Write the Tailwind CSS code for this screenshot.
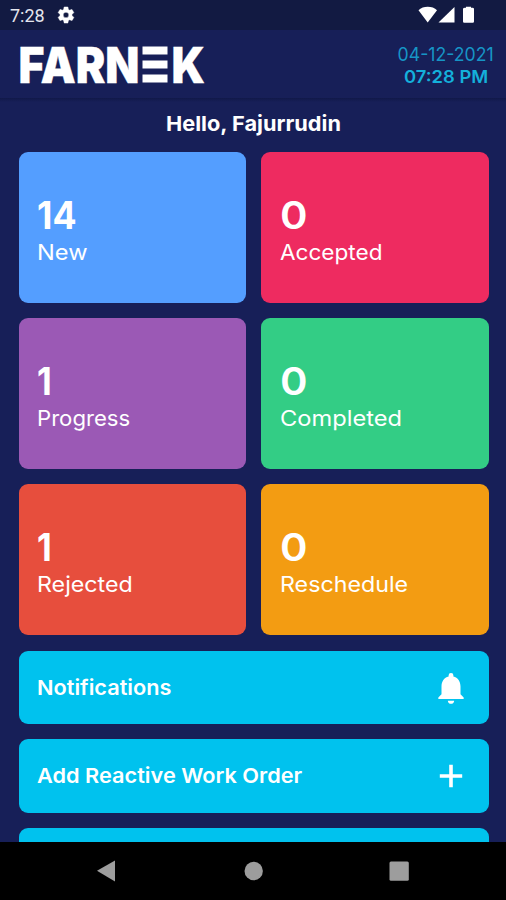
<!DOCTYPE html>
<html lang="en">
<head>
<meta charset="utf-8">
<title>Farnek</title>
<script src="https://cdn.jsdelivr.net/npm/@tailwindcss/browser@4"></script>
</head>
<body class="w-[506px] h-[900px] overflow-hidden bg-[#171f58] text-white font-['Inter','Open_Sans',sans-serif] flex flex-col">
  <div class="h-[30px] shrink-0 bg-[#121a42] flex items-center pl-[10px] pr-[32px]">
    <span class="font-['Roboto',sans-serif] text-[18px] leading-[30px] text-[#e4e6ee] pt-[2px]">7:28</span>
    <svg class="ml-[11px]" width="20" height="20" viewBox="0 0 24 24" fill="#fff" stroke="#fff" stroke-width=".6"><path d="M19.14 12.94c.04-.3.06-.61.06-.94s-.02-.64-.07-.94l2.03-1.58a.49.49 0 0 0 .12-.61l-1.92-3.32a.49.49 0 0 0-.59-.22l-2.39.96a7 7 0 0 0-1.62-.94l-.36-2.54a.48.48 0 0 0-.48-.41h-3.84a.48.48 0 0 0-.47.41l-.36 2.54a7 7 0 0 0-1.62.94l-2.39-.96a.48.48 0 0 0-.59.22L2.74 8.87a.48.48 0 0 0 .12.61l2.03 1.58a6 6 0 0 0 0 1.88l-2.03 1.58a.49.49 0 0 0-.12.61l1.92 3.32c.12.22.37.29.59.22l2.39-.96c.5.38 1.03.7 1.62.94l.36 2.54c.05.24.24.41.48.41h3.84c.24 0 .44-.17.47-.41l.36-2.54a7 7 0 0 0 1.62-.94l2.39.96c.22.08.47 0 .59-.22l1.92-3.32a.48.48 0 0 0-.12-.61zM12 15.4a3.4 3.4 0 1 1 0-6.8 3.4 3.4 0 0 1 0 6.8z"/></svg>
    <svg class="ml-auto" width="56" height="18" viewBox="0 0 56 18" fill="#fff"><path d="M.5 4.200C5-.4 14.500-.4 19 4.200L9.700 16.500z"/><path d="M20.500 16.500 36.500 1v15.500z"/><path d="M47 1.800h1V.8h5v1h1.500q1.500 0 1.500 1.200v12.500q0 1.200-1.200 1.200h-8.600q-1.200 0-1.200-1.200V3q0-1.200 2-1.200z"/></svg>
  </div>
  <header class="h-[68px] shrink-0 flex justify-between pl-[14px] pr-[12px]">
    <svg class="overflow-visible" width="196" height="68" viewBox="14 30 196 68" fill="#fff" font-family="Inter, sans-serif" font-weight="900" font-size="49">
      <text x="18.500" y="82.500" textLength="121" lengthAdjust="spacingAndGlyphs" stroke="#fff" stroke-width=".3">FARN</text>
      <path d="M142.500 46.500h25v8h-25zM142.500 60.500h25v8h-25zM142.500 74.500h25v8h-25z"/>
      <text x="171.500" y="82.500" textLength="33.500" lengthAdjust="spacingAndGlyphs" stroke="#fff" stroke-width=".3">K</text>
    </svg>
    <div class="w-[96px] flex flex-col items-center pt-[14px] text-[#14b0db] whitespace-nowrap">
      <div class="text-[19px] leading-[22px] text-[#1695c6] scale-x-93">04-12-2021</div>
      <div class="text-[17.500px] leading-[22px] font-semibold scale-x-105">07:28 PM</div>
    </div>
  </header>
  <div class="h-[4px] shrink-0 bg-linear-to-b from-[#111949] to-[#171f58]"></div>
  <main class="flex-1 min-h-0 overflow-hidden px-[18.500px]">
    <h1 class="h-[50px] pt-[8px] text-center text-[20.500px] leading-[28px] font-bold scale-x-106">Hello, Fajurrudin</h1>
    <div class="grid grid-cols-2 gap-x-[15px] gap-y-[14.800px] mr-[-1px]">
      <div class="h-[151.300px] rounded-[9px] bg-[#549eff] pl-[19px] pt-[44px]"><div class="ml-[-1px] w-fit origin-left text-[38px] leading-[38px] font-bold scale-x-94">14</div><div class="w-fit origin-left mt-[3px] ml-[-0.500px] text-[21.500px] leading-[30px] scale-x-110">New</div></div>
      <div class="h-[151.300px] rounded-[9px] bg-[#ee2b60] pl-[19px] pt-[44px]"><div class="w-fit origin-left text-[38px] leading-[38px] font-semibold scale-x-110">0</div><div class="w-fit origin-left mt-[3px] text-[21.500px] leading-[30px] scale-x-105">Accepted</div></div>
      <div class="h-[151.300px] rounded-[9px] bg-[#9b59b5] pl-[19px] pt-[44px]"><div class="ml-[-1px] w-fit origin-left text-[38px] leading-[38px] font-bold scale-x-90">1</div><div class="w-fit origin-left mt-[3px] ml-[-0.500px] text-[21.500px] leading-[30px] scale-x-103">Progress</div></div>
      <div class="h-[151.300px] rounded-[9px] bg-[#33cd85] pl-[19px] pt-[44px]"><div class="w-fit origin-left text-[38px] leading-[38px] font-semibold scale-x-110">0</div><div class="w-fit origin-left mt-[3px] text-[21.500px] leading-[30px] scale-x-110">Completed</div></div>
      <div class="h-[151.300px] rounded-[9px] bg-[#e74e3d] pl-[19px] pt-[44px]"><div class="ml-[-1px] w-fit origin-left text-[38px] leading-[38px] font-bold scale-x-90">1</div><div class="w-fit origin-left mt-[3px] ml-[-0.500px] text-[21.500px] leading-[30px] scale-x-108">Rejected</div></div>
      <div class="h-[151.300px] rounded-[9px] bg-[#f39c12] pl-[19px] pt-[44px]"><div class="w-fit origin-left text-[38px] leading-[38px] font-semibold scale-x-110">0</div><div class="w-fit origin-left mt-[3px] text-[21.500px] leading-[30px] scale-x-108">Reschedule</div></div>
    </div>
    <div class="mt-[15.400px] mr-[-1px] flex flex-col gap-[15px]">
      <div class="h-[73.500px] rounded-[9px] bg-[#00c2ee] flex items-center justify-between pl-[18.800px] pr-[18.800px]">
        <span class="text-[20.500px] pt-[1px] font-semibold origin-left scale-x-106">Notifications</span>
        <svg width="38" height="38" viewBox="0 0 24 24" fill="#fff"><path d="M12 22c1.100 0 2-.9 2-2h-4c0 1.100.9 2 2 2zm6-6v-5c0-3.070-1.640-5.640-4.500-6.320V4a1.500 1.500 0 0 0-3 0v.68C7.630 5.360 6 7.920 6 11v5l-2 2v1h16v-1z"/></svg>
      </div>
      <div class="h-[73.500px] rounded-[9px] bg-[#00c2ee] flex items-center justify-between pl-[18.800px] pr-[18.800px]">
        <span class="text-[20.500px] pt-[1px] font-semibold origin-left scale-x-106">Add Reactive Work Order</span>
        <svg width="38" height="38" viewBox="0 0 38 38" fill="#fff"><path d="M17.200 7.800h3.600v9.400h9.400v3.600h-9.400v9.400h-3.600v-9.400H7.800v-3.600h9.400z"/></svg>
      </div>
      <div class="h-[73.500px] rounded-[9px] bg-[#00c2ee]"></div>
    </div>
  </main>
  <nav class="h-[58px] shrink-0 bg-black">
    <svg width="506" height="58" viewBox="0 842 506 58" fill="#9d9d9d"><path d="M97 870.800 115 860.500v21z"/><circle cx="253.700" cy="871" r="9.200"/><rect x="389.500" y="861.500" width="19.300" height="19.300" rx="1.500"/></svg>
  </nav>
</body>
</html>
